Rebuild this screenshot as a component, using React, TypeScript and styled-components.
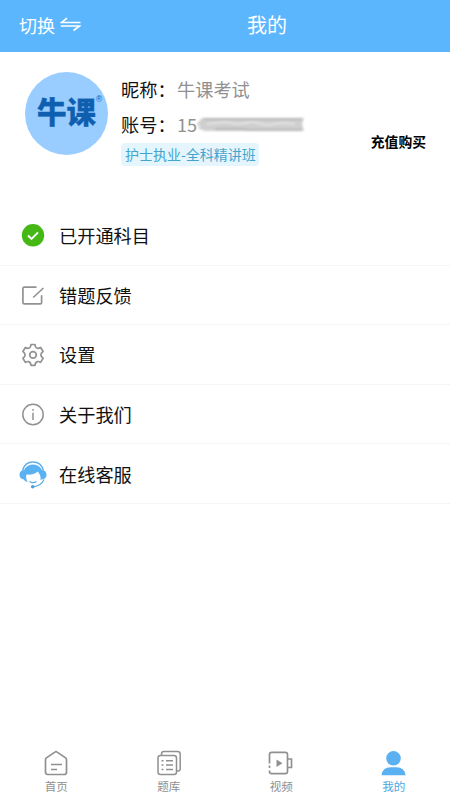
import React from 'react';
import styled, { createGlobalStyle } from 'styled-components';

const GlobalStyle = createGlobalStyle`
  * { box-sizing: border-box; }
  body { margin: 0; background: #fff; font-family: "Noto Sans CJK SC", sans-serif; color: #111; }
  svg { display: block; flex: none; }
`;

const Screen = styled.div`
  width: 100%;
  height: 800px;
  display: flex;
  flex-direction: column;
  background: #fff;
  overflow: hidden;
  white-space: nowrap;
`;

const Header = styled.header`
  height: 52px;
  flex: none;
  display: grid;
  grid-template-columns: 247px 1fr;
  align-items: center;
  padding-bottom: 3px;
  background: #5cb6fe;
  color: #fff;
`;

const SwitchButton = styled.div`
  display: flex;
  align-items: center;
  gap: 5px;
  padding-left: 19px;
  font-size: 18px;
  line-height: 24px;
`;

const Title = styled.h1`
  margin: 0;
  font-size: 20px;
  font-weight: 400;
  line-height: 26px;
`;

const Profile = styled.section`
  height: 154px;
  flex: none;
  display: flex;
  padding: 20px 24px 0 25px;
`;

const Avatar = styled.div`
  width: 83px;
  height: 83px;
  flex: none;
  display: flex;
  align-items: center;
  padding: 0 0 8px 12px;
  border-radius: 50%;
  background: #99ccff;
  color: #0f5fb0;
`;

const Brand = styled.span`
  font-size: 29.5px;
  line-height: 36px;
  font-weight: 900;
  -webkit-text-stroke: 0.3px #0f5fb0;
`;

const Registered = styled.sup`
  align-self: flex-start;
  margin: 22px 0 0;
  font: 8.5px/10px "Liberation Sans", sans-serif;
`;

const Details = styled.div`
  flex: 1;
  padding: 5px 0 0 13px;
`;

const Field = styled.div`
  height: 34.5px;
  display: flex;
  font-size: 18.2px;
  line-height: 25px;
`;

const Label = styled.span`
  width: 56px;
  color: #111;
`;

const Value = styled.span`
  color: #919191;
`;

const Mask = styled.svg`
  margin: 3px 0 0 -2px;
`;

const Course = styled.div`
  width: 138px;
  height: 23px;
  margin-top: -3px;
  padding-left: 4px;
  border-radius: 4px;
  background: #e5f5fd;
  color: #43a5cd;
  font-size: 14px;
  line-height: 23px;
`;

const Recharge = styled.div`
  padding-top: 59px;
  font-size: 13.8px;
  line-height: 20px;
  font-weight: 700;
  color: #000;
`;

const Menu = styled.nav`
  flex: 1;
`;

const MenuRow = styled.div`
  height: 59.6px;
  display: flex;
  align-items: center;
  padding-left: 19px;
  border-bottom: 1px solid #f5f5f5;
  font-size: 18.2px;
  line-height: 26px;
`;

const IconSlot = styled.span`
  width: 28px;
  margin-right: 12px;
  padding-top: 2px;
  display: flex;
  justify-content: center;
`;

const TabBar = styled.footer`
  height: 55px;
  flex: none;
  display: grid;
  grid-template-columns: repeat(4, 1fr);
`;

const Tab = styled.div<{ $active?: boolean }>`
  display: flex;
  flex-direction: column;
  align-items: center;
  padding-top: 4px;
  font-size: 11.6px;
  line-height: 18px;
  color: ${(p) => (p.$active ? '#4da5e3' : '#909090')};
`;

const SwapIcon = () => (
  <svg width="21" height="15" viewBox="0 0 21 15" fill="none" stroke="#fff" strokeWidth="1.6">
    <path d="M7 1.200L1.500 5.500H20.500M.8 9H19.500L13.500 13.500" />
  </svg>
);

const CheckIcon = () => (
  <svg width="24" height="24" viewBox="0 0 24 24">
    <circle cx="12" cy="11.3" r="11.2" fill="#45b816" />
    <path d="M7 11.5l3.5 3.4L17 8.3" fill="none" stroke="#fff" strokeWidth="1.9" />
  </svg>
);

const EditIcon = () => (
  <svg width="24" height="24" viewBox="0 0 24 24" fill="none" stroke="#929292" strokeWidth="1.7">
    <path d="M15.500 3.200H3.300q-1.400 0-1.400 1.400v13.800q0 1.400 1.400 1.400h15.900q1.400 0 1.400-1.400v-7.200M12.200 13.500L22.400 4" />
  </svg>
);

const GearIcon = () => (
  <svg width="24" height="24" viewBox="0 0 24 24" fill="none" stroke="#929292" strokeWidth="1.7" strokeLinejoin="round">
    <path d="M10 1.500h4q.3 3.200 2.400 3.700 1 .4 3.200-.8l2.500 4.100q-2.300 1.500-2.200 3.400t2.200 3.400l-2.500 4.100q-2.200-1.200-3.200-.8-2.100.5-2.400 3.700h-4q-.3-3.200-2.400-3.700-1-.4-3.200.8l-2.500-4.100q2.300-1.500 2.200-3.400t-2.200-3.400l2.500-4.100q2.200 1.200 3.200.8 2.100-.5 2.400-3.700z" />
    <circle cx="12" cy="11.900" r="3.300" />
  </svg>
);

const InfoIcon = () => (
  <svg width="24" height="24" viewBox="0 0 24 24" fill="none" stroke="#929292" strokeWidth="1.5">
    <circle cx="12" cy="11.500" r="10.200" />
    <path d="M12 9.700v7.300M12 6v1.700" />
  </svg>
);

const ServiceIcon = () => (
  <svg width="28" height="28" viewBox="0 0 28 28">
    <path d="M3.500 9.500C5 4 9 1.100 14 1.100S23 4 24.500 9.500" fill="none" stroke="#62aeea" strokeWidth="1.500" />
    <path d="M4.500 18C2.500 9 7.500 3.600 14 3.600S25.500 9 23.500 18l-2 1C22 15.500 21 13 18.700 10.500 15.500 13.500 11 14 7.500 13.500c-.8 2.500-.5 4.500 1.300 7.500C6.500 20.500 5.200 19.500 4.500 18z" fill="#5bb2f3" />
    <path d="M3.500 9.200h2.200v9H3.500Q.5 17 .5 13.700t3-4.500zM24.500 9.200h-2.200v9h2.200q3-1.200 3-4.500t-3-4.500z" fill="#5bb2f3" />
    <path d="M10.500 20.500q3.500 2.300 7 0M25 18.500q-2.800 6.500-11 7.300" fill="none" stroke="#5bace6" strokeWidth="1.200" />
    <circle cx="13.700" cy="25.700" r="1.800" fill="#4c9fd8" />
  </svg>
);

const HomeIcon = () => (
  <svg width="26" height="28" viewBox="0 0 26 28" fill="none" stroke="#909090" strokeWidth="1.700" strokeLinejoin="round">
    <path d="M2.500 10.500q0-1 .9-1.600l8.500-5.800q1.100-.8 2.200 0l8.500 5.800q.9.600.9 1.600v12.700q0 2.300-2.300 2.300H4.800q-2.300 0-2.300-2.300z" />
    <path d="M8 15.500h11M8 20.500h6" />
  </svg>
);

const BankIcon = () => (
  <svg width="26" height="28" viewBox="0 0 26 28" fill="none" stroke="#909090" strokeWidth="1.500">
    <rect x="2" y="6.500" width="18.500" height="19" rx="2.500" />
    <path d="M5.500 6V4.800q0-2.300 2.300-2.300h13.700q2.700 0 2.700 2.700v14.500q0 2.300-2.300 2.300h-1.400" />
    <path d="M5.500 11.700h2M10 11.700h7M5.500 16h2M10 16h7M5.500 20.500h2M10 20.500h7" />
  </svg>
);

const VideoIcon = () => (
  <svg width="26" height="28" viewBox="0 0 26 28" fill="none" stroke="#909090" strokeWidth="1.700">
    <path d="M1.500 14.500V5.500q0-2.200 2.200-2.200h13.600q2.200 0 2.200 2.200v17q0 2.200-2.200 2.200H3.700q-2.200 0-2.200-2.200v-1M1.500 16.500v2.500M20 10h3.500v8.500H20" />
    <path d="M8.500 10.500v7.500l6-3.700z" fill="#909090" stroke="none" />
  </svg>
);

const UserIcon = () => (
  <svg width="26" height="28" viewBox="0 0 26 28" fill="#5ab0f1">
    <circle cx="12.500" cy="9.300" r="7.300" />
    <path d="M.5 26.200q1-7.900 9-7.900h6q8 0 9 7.900z" />
  </svg>
);

const menuItems = [
  { label: '已开通科目', Icon: CheckIcon },
  { label: '错题反馈', Icon: EditIcon },
  { label: '设置', Icon: GearIcon },
  { label: '关于我们', Icon: InfoIcon },
  { label: '在线客服', Icon: ServiceIcon },
];

const tabs = [
  { label: '首页', Icon: HomeIcon },
  { label: '题库', Icon: BankIcon },
  { label: '视频', Icon: VideoIcon },
  { label: '我的', Icon: UserIcon, active: true },
];

export default function App() {
  return (
    <Screen>
      <GlobalStyle />
      <Header>
        <SwitchButton>切换<SwapIcon /></SwitchButton>
        <Title>我的</Title>
      </Header>
      <Profile>
        <Avatar>
          <Brand>牛课</Brand>
          <Registered>®</Registered>
        </Avatar>
        <Details>
          <Field><Label>昵称：</Label><Value>牛课考试</Value></Field>
          <Field>
            <Label>账号：</Label><Value>15</Value>
            <Mask width="112" height="20" viewBox="0 0 112 20">
              <defs>
                <filter id="smudge" x="-5%" y="-20%" width="110%" height="140%">
                  <feGaussianBlur stdDeviation="0.9" />
                </filter>
              </defs>
              <g filter="url(#smudge)">
                <path d="M1 10L7 3h102l-2 6 2 7H10l-8-3 4-2z" fill="#cfcfcf" />
                <path d="M9 4h98M20 14h26l8 1h53" stroke="#b0b0b0" strokeWidth="1.500" fill="none" />
                <path d="M12 9l18-2 12 2 16-2 14 3 15-2 13 1" stroke="#e3e3e3" strokeWidth="1.800" fill="none" />
              </g>
            </Mask>
          </Field>
          <Course>护士执业-全科精讲班</Course>
        </Details>
        <Recharge>充值购买</Recharge>
      </Profile>
      <Menu>
        {menuItems.map(({ label, Icon }) => (
          <MenuRow key={label}><IconSlot><Icon /></IconSlot>{label}</MenuRow>
        ))}
      </Menu>
      <TabBar>
        {tabs.map(({ label, Icon, active }) => (
          <Tab key={label} $active={active}><Icon />{label}</Tab>
        ))}
      </TabBar>
    </Screen>
  );
}
